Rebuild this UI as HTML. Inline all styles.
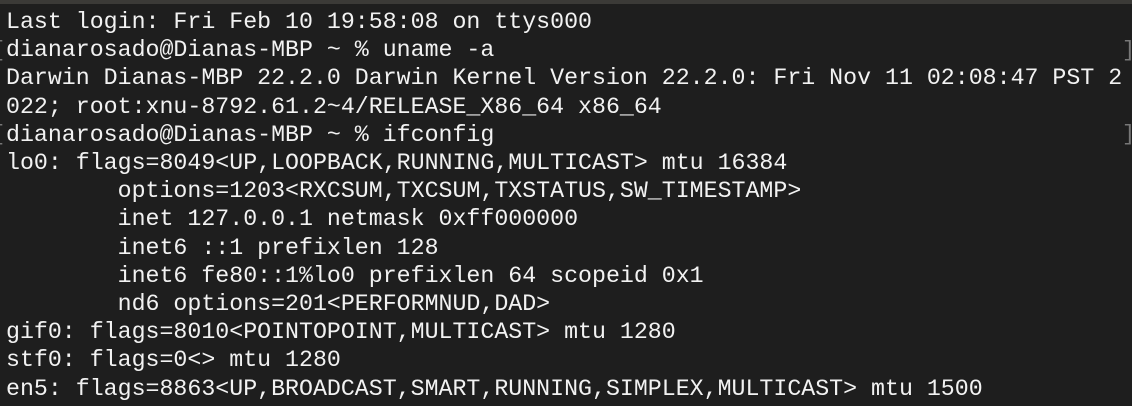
<!DOCTYPE html><html><head><style>
html,body{margin:0;padding:0;background:#1e1e1e;}
#w{width:1132px;height:406px;background:#1e1e1e;overflow:hidden;position:relative;}
.top{position:absolute;left:0;top:0;width:1132px;height:4px;background:#3b3a37;}
pre{position:absolute;left:6px;top:8px;margin:0;font-family:"Liberation Mono",monospace;font-size:23.25px;line-height:28.2px;color:#f2f2f2;letter-spacing:0;}
.br{position:absolute;color:#777;font-family:"Liberation Mono",monospace;font-size:22px;}
</style></head><body><div id="w"><div class="top"></div>
<span class="br" style="left:-8px;top:38px">[</span><span class="br" style="left:1122px;top:38px">]</span>
<span class="br" style="left:-8px;top:122px">[</span><span class="br" style="left:1122px;top:122px">]</span>
<pre>Last login: Fri Feb 10 19:58:08 on ttys000
dianarosado@Dianas-MBP ~ % uname -a
Darwin Dianas-MBP 22.2.0 Darwin Kernel Version 22.2.0: Fri Nov 11 02:08:47 PST 2
022; root:xnu-8792.61.2~4/RELEASE_X86_64 x86_64
dianarosado@Dianas-MBP ~ % ifconfig
lo0: flags=8049&lt;UP,LOOPBACK,RUNNING,MULTICAST&gt; mtu 16384
        options=1203&lt;RXCSUM,TXCSUM,TXSTATUS,SW_TIMESTAMP&gt;
        inet 127.0.0.1 netmask 0xff000000
        inet6 ::1 prefixlen 128
        inet6 fe80::1%lo0 prefixlen 64 scopeid 0x1
        nd6 options=201&lt;PERFORMNUD,DAD&gt;
gif0: flags=8010&lt;POINTOPOINT,MULTICAST&gt; mtu 1280
stf0: flags=0&lt;&gt; mtu 1280
en5: flags=8863&lt;UP,BROADCAST,SMART,RUNNING,SIMPLEX,MULTICAST&gt; mtu 1500</pre>
</div></body></html>
